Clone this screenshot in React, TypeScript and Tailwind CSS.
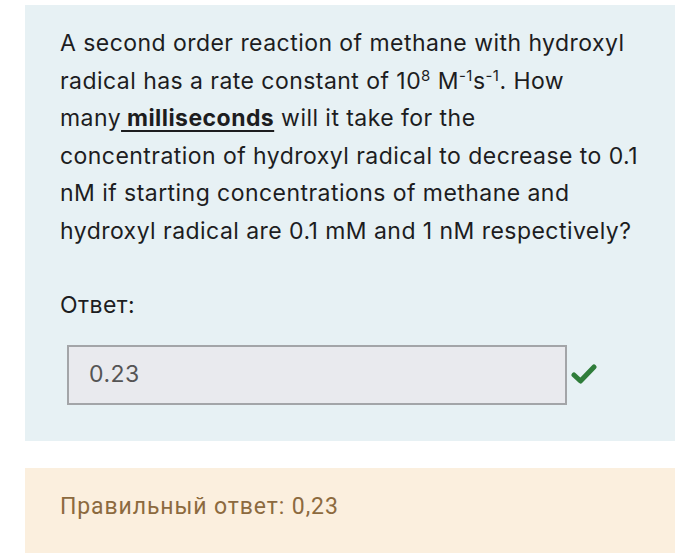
import React from 'react';

const App: React.FC = () => {
  return (
    <div className="min-h-[553px] bg-white px-[25px] pt-[5px] text-[#1d1d1f]" style={{ fontFamily: 'Inter, "Noto Sans", sans-serif' }}>
      {/* Question card */}
      <section className="bg-[#e7f1f4] pl-[35px] pr-[20px] pt-[20px] pb-[36px]">
        <p className="text-[23px] leading-[37.5px] tracking-[0.45px]">
          A second order reaction of methane with hydroxyl
          <br />
          radical has a rate constant of 10<sup className="text-[15px]">8</sup> M<sup className="text-[15px]">-1</sup>s
          <sup className="text-[15px]">-1</sup>. How
          <br />
          many
          <span className="font-bold underline underline-offset-[4px] decoration-[2px]"> milliseconds</span> will it take
          for the
          <br />
          concentration of hydroxyl radical to decrease to 0.1
          <br />
          nM if starting concentrations of methane and
          <br />
          hydroxyl radical are 0.1 mM and 1 nM respectively?
        </p>

        <p className="mt-[37px] text-[23px] leading-[37.5px] tracking-[0.45px]">Ответ:</p>

        <div className="mt-[20px] ml-[7px] flex items-center gap-[4px]">
          <div className="flex h-[60px] w-[500px] items-center border-[2px] border-[#a3a5a8] bg-[#e9eaee] px-[20px] text-[23px] tracking-[0.45px] text-[#555]">
            0.23
          </div>
          <svg width="26" height="20" viewBox="0 0 26 20" className="mt-[-2px]">
            <path d="M3 11 L9.5 17 L23 3" fill="none" stroke="#2f7d3a" strokeWidth="5" strokeLinecap="round" strokeLinejoin="round" />
          </svg>
        </div>
      </section>

      {/* Feedback */}
      <section className="mt-[27px] bg-[#fbefde] px-[35px] pt-[20px] pb-[30px]">
        <p className="text-[23px] leading-[37.5px] tracking-[0.9px] text-[#8c6a3e]" style={{ fontFamily: 'Roboto, "Liberation Sans", sans-serif' }}>
          Правильный ответ: 0,23
        </p>
      </section>
    </div>
  );
};

export default App;
